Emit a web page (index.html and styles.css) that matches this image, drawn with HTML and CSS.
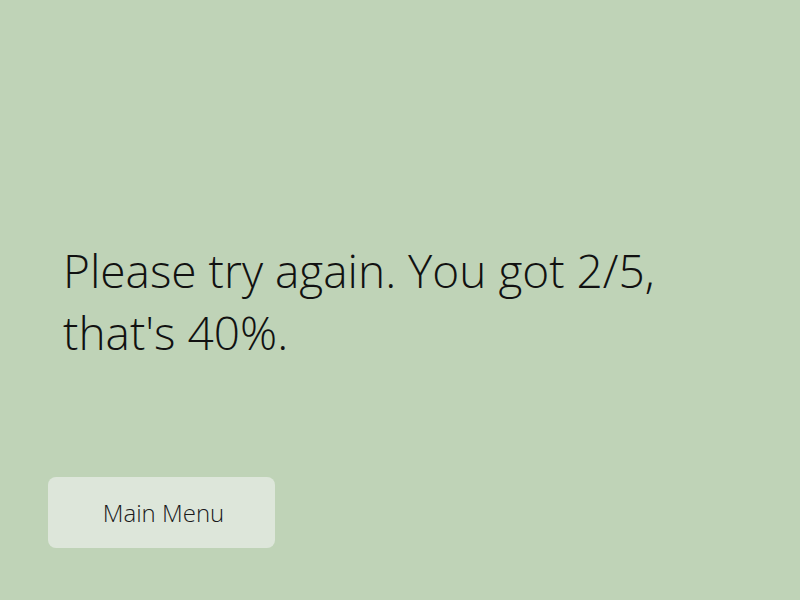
FILE: index.html
```html
<!DOCTYPE html>
<html>
<head>
<meta charset="utf-8">
<link rel="stylesheet" href="styles.css">
</head>
<body>
<main class="screen">
  <p class="message">Please try again. You got 2/5, that's 40%.</p>
  <button class="menu-btn">Main Menu</button>
</main>
</body>
</html>
```
FILE: styles.css
```css
html, body {
  margin: 0;
  padding: 0;
}
body {
  background: #bfd3b7;
  font-family: "Open Sans", "Liberation Sans", sans-serif;
  font-weight: 300;
  color: #111;
}
.screen {
  width: 800px;
  height: 600px;
  box-sizing: border-box;
  padding: 239px 0 0 48px;
  display: flex;
  flex-direction: column;
  align-items: flex-start;
}
.message {
  margin: 0 0 0 15px;
  width: 660px;
  font-size: 46px;
  line-height: 62px;
}
.menu-btn {
  margin-top: 114px;
  width: 227px;
  height: 71px;
  border: none;
  border-radius: 8px;
  background: #dde6da;
  font-family: "Open Sans", "Liberation Sans", sans-serif;
  font-weight: 300;
  font-size: 24px;
  color: #1a1a1a;
  padding: 0 0 0 4px;
}
```
